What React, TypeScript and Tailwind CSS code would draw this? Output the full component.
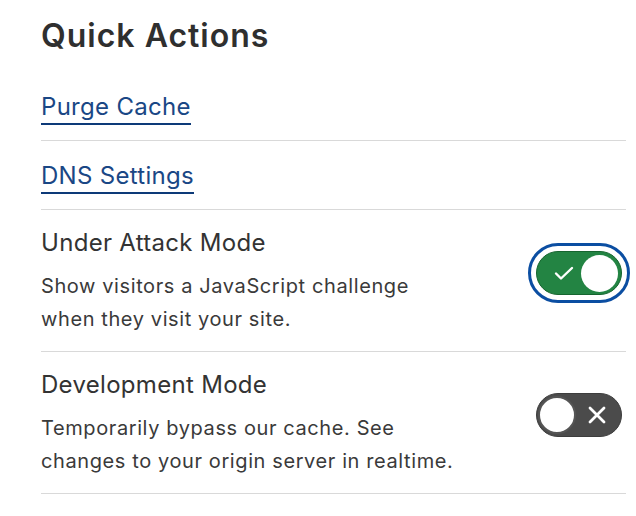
import React, { useState } from 'react';

const font = { fontFamily: 'Inter, "Noto Sans", sans-serif' };

const Toggle: React.FC<{ on: boolean; focused?: boolean; onClick: () => void }> = ({ on, focused, onClick }) => (
  <button
    onClick={onClick}
    className={`relative w-[86px] h-[44px] rounded-full shrink-0 border flex items-center ${
      on ? 'bg-[#238443] border-[#16652f]' : 'bg-[#4b4b4b] border-[#3d3d3d]'
    } ${focused ? 'outline-solid outline-3 outline-offset-[5px] outline-[#0b4ea2]' : ''}`}
  >
    {on ? (
      <>
        <svg className="ml-[15px] w-[24px] h-[24px]" viewBox="0 0 24 24" fill="none" stroke="white" strokeWidth="2.4" strokeLinecap="round" strokeLinejoin="round">
          <path d="M4 12.5l5 5L20 7" />
        </svg>
        <span className="ml-auto mr-[3px] w-[37px] h-[37px] rounded-full bg-white" />
      </>
    ) : (
      <>
        <span className="ml-[1px] w-[38px] h-[38px] rounded-full bg-white border-2 border-[#555]" />
        <svg className="ml-[11px] w-[20px] h-[20px]" viewBox="0 0 20 20" fill="none" stroke="white" strokeWidth="2.8" strokeLinecap="round">
          <path d="M3 3l14 14M17 3L3 17" />
        </svg>
      </>
    )}
  </button>
);

export default function App() {
  const [attack, setAttack] = useState(true);
  const [dev, setDev] = useState(false);

  const toggles = [
    {
      title: 'Under Attack Mode',
      lines: ['Show visitors a JavaScript challenge', 'when they visit your site.'],
      on: attack,
      focused: true,
      set: () => setAttack(!attack),
    },
    {
      title: 'Development Mode',
      lines: ['Temporarily bypass our cache. See', 'changes to your origin server in realtime.'],
      on: dev,
      focused: false,
      set: () => setDev(!dev),
    },
  ];

  return (
    <div className="bg-white min-h-[516px] pl-[41px] pr-[10px] text-[#333]" style={font}>
      <h2 className="h-[72px] pt-[18px] text-[32px] leading-[36px] font-semibold text-[#2f2f2f] tracking-[1px]">Quick Actions</h2>

      {['Purge Cache', 'DNS Settings'].map((label) => (
        <div key={label} className="pt-[21px] pb-[15px] border-b border-[#d9d9d9]">
          <a href="#" className="inline-block text-[24px] leading-[28px] tracking-[0.3px] text-[#1a4785] pb-[2px] border-b-2 border-[#0d3a78]">
            {label}
          </a>
        </div>
      ))}

      {toggles.map((t) => (
        <div key={t.title} className="flex items-center justify-between pt-[18px] pb-[15px] border-b border-[#d9d9d9]">
          <div>
            <h3 className="text-[24px] leading-[29px] tracking-[0.3px] text-[#333]">{t.title}</h3>
            <p className="mt-[13px] text-[20px] leading-[33px] tracking-[0.6px] text-[#3a3a3a]">
              {t.lines.map((l) => (
                <span key={l} className="block">{l}</span>
              ))}
            </p>
          </div>
          <div className="mr-[4px] mb-[18px]">
            <Toggle on={t.on} focused={t.focused} onClick={t.set} />
          </div>
        </div>
      ))}
    </div>
  );
}
